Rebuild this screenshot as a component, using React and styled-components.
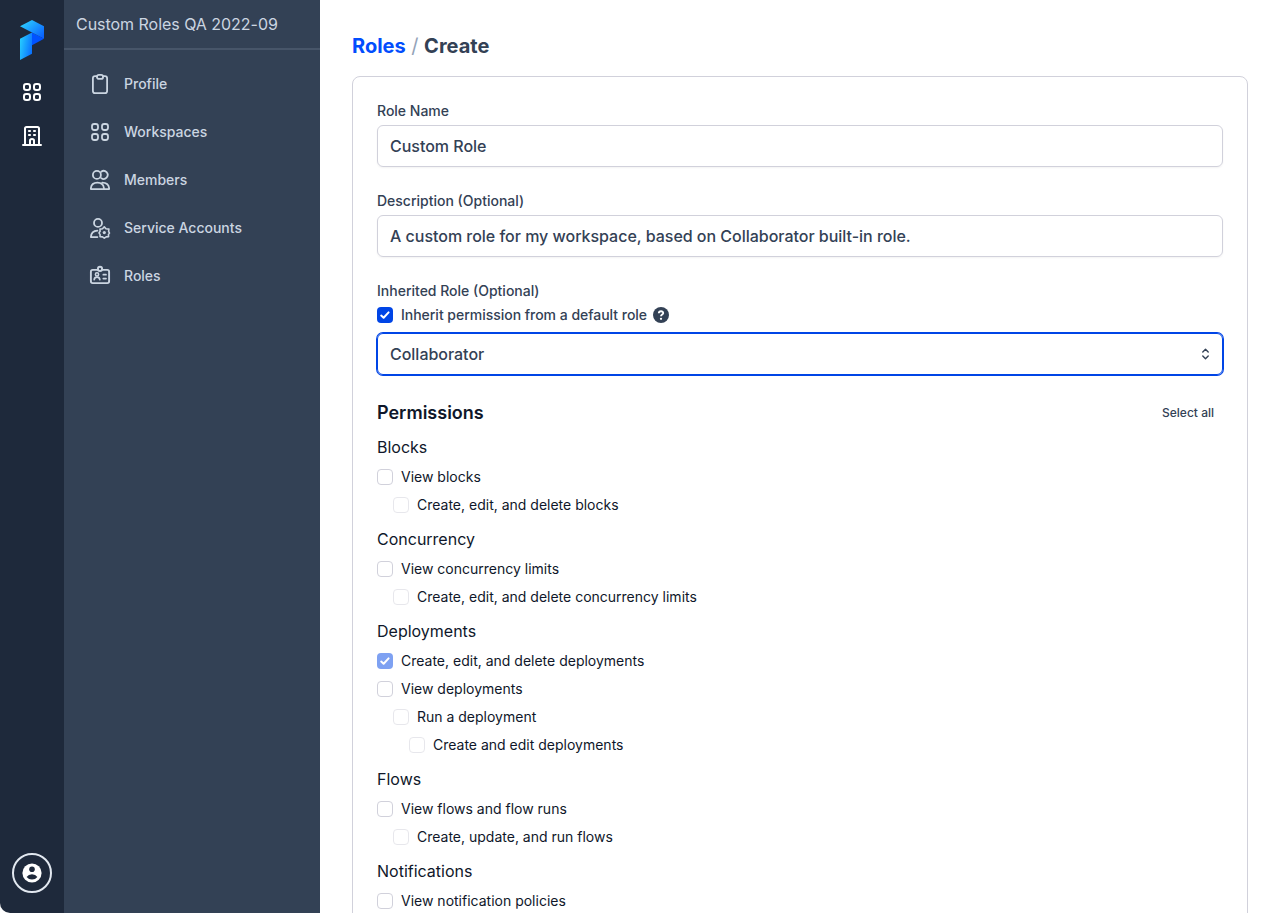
import React from 'react';
import styled, { createGlobalStyle } from 'styled-components';

const GlobalStyle = createGlobalStyle`
  *, *::before, *::after { box-sizing: border-box; }
  html, body { margin: 0; padding: 0; background: #fff; overflow: hidden; }
  body { font-family: Inter, "Liberation Sans", sans-serif; color: #0f172a; }
`;

const Page = styled.div`
  display: flex;
  height: 913px;
  overflow: hidden;
  background: #fff;
`;

const Rail = styled.nav`
  display: flex;
  flex-direction: column;
  align-items: center;
  flex: 0 0 64px;
  padding: 20px 0;
  background: #1e293b;
  border-bottom-left-radius: 10px;
  color: #fff;
`;

const RailItem = styled.a`
  display: flex;
  margin-top: 20px;
`;

const Avatar = styled.button`
  display: flex;
  align-items: center;
  justify-content: center;
  width: 40px;
  height: 40px;
  margin-top: auto;
  padding: 0;
  border: 2px solid #e2e8f0;
  border-radius: 50%;
  background: none;
  color: #fff;
`;

const Sidebar = styled.aside`
  flex: 0 0 256px;
  background: #334155;
  color: #cbd5e1;
`;

const AccountName = styled.div`
  height: 50px;
  padding: 12px 12px 0;
  border-bottom: 2px solid #475569;
  font-size: 16px;
  line-height: 24px;
  letter-spacing: -0.03px;
`;

const NavList = styled.div`
  display: flex;
  flex-direction: column;
  padding: 10px 24px;
`;

const NavItem = styled.a`
  display: flex;
  align-items: center;
  gap: 12px;
  height: 48px;
  font-size: 14px;
  font-weight: 500;
  line-height: 20px;
`;

const Main = styled.main`
  flex: 1;
  min-width: 0;
  padding: 32px 32px 0;
`;

const Breadcrumbs = styled.h1`
  display: flex;
  gap: 5.6px;
  margin: 0 0 16px;
  font-size: 20px;
  font-weight: 700;
  line-height: 28px;
  color: #334155;
`;

const CrumbLink = styled.a`
  color: #024dfd;
`;

const Slash = styled.span`
  font-weight: 400;
  color: #94a3b8;
`;

const Card = styled.form`
  height: 1100px;
  padding: 24px;
  border: 1px solid #d1d1db;
  border-radius: 8px;
`;

const Field = styled.div`
  display: flex;
  flex-direction: column;
  margin-bottom: 24px;
`;

const Label = styled.label`
  margin-bottom: 4px;
  font-size: 14px;
  font-weight: 500;
  line-height: 20px;
  color: #334155;
`;

const Control = styled.div`
  display: flex;
  align-items: center;
  justify-content: space-between;
  height: 42px;
  padding: 0 13px 0 12px;
  border: 1px solid ${(p) => (p.$focused ? '#0045e6' : '#d1d1db')};
  border-radius: 6px;
  box-shadow: ${(p) => (p.$focused ? '0 0 0 1px #0045e6' : '0 1px 2px rgba(0, 0, 0, 0.05)')};
  font-size: 16px;
  font-weight: 500;
  line-height: 24px;
  letter-spacing: -0.02px;
  color: #334155;
`;

const InheritRow = styled.div`
  display: flex;
  align-items: center;
  height: 20px;
  margin-bottom: 8px;
  font-size: 14px;
  font-weight: 500;
  line-height: 20px;
  letter-spacing: -0.02px;
  color: #334155;
`;

const HelpIcon = styled.svg`
  margin-left: 6px;
`;

const Box = styled.span`
  display: flex;
  align-items: center;
  justify-content: center;
  flex: none;
  width: 16px;
  height: 16px;
  margin-right: 8px;
  border: ${(p) => (p.$checked ? 'none' : '1px solid #d1d1db')};
  border-radius: 4px;
  background: ${(p) => (p.$checked ? '#0045e6' : '#fff')};
  opacity: ${(p) => (p.$disabled ? 0.5 : 1)};
`;

const PermissionsHeader = styled.div`
  display: flex;
  align-items: center;
  justify-content: space-between;
  height: 28px;
  margin-bottom: 8px;
`;

const PermissionsTitle = styled.h2`
  margin: 0;
  font-size: 18px;
  font-weight: 600;
  line-height: 28px;
`;

const SelectAll = styled.button`
  padding: 0 9px;
  border: 0;
  background: none;
  font: 500 12px/16px Inter, sans-serif;
  color: #334155;
`;

const Group = styled.section`
  display: flex;
  flex-direction: column;
  gap: 8px;
  margin-bottom: 12px;
`;

const GroupTitle = styled.h3`
  margin: 0;
  font-size: 16px;
  font-weight: 400;
  line-height: 24px;
`;

const Permission = styled.label`
  display: flex;
  align-items: center;
  height: 20px;
  padding-left: ${(p) => p.$level * 16}px;
  font-size: 14px;
  line-height: 20px;
`;

const Icon = ({ children, size = 24, width = 1.5 }) => (
  <svg width={size} height={size} viewBox="0 0 24 24" fill="none" stroke="currentColor"
    strokeWidth={width} strokeLinecap="round" strokeLinejoin="round">
    {children}
  </svg>
);

const Logo = () => (
  <svg width="24" height="40" viewBox="0 0 24 40">
    <defs>
      <linearGradient id="top" x1="0" y1="0" x2="1" y2="0.8">
        <stop offset="0" stopColor="#30dcff" />
        <stop offset="1" stopColor="#0a63ff" />
      </linearGradient>
      <linearGradient id="stem" x1="0" y1="0.2" x2="1" y2="0.6">
        <stop offset="0" stopColor="#27ceff" />
        <stop offset="1" stopColor="#0a72ff" />
      </linearGradient>
    </defs>
    <path d="M12 12.5 24 18.8 12 25.2Z" fill="#0052ff" />
    <path d="M0 6.3 12 0 24 6.3V18.8Z" fill="url(#top)" />
    <path d="M0 18.8 12 12.5V33.8L0 40Z" fill="url(#stem)" />
  </svg>
);

const Grid = ({ width }) => (
  <Icon width={width}>
    {[[4, 4], [14, 4], [4, 14], [14, 14]].map(([x, y]) => (
      <rect key={`${x}-${y}`} x={x} y={y} width="6" height="6" rx="2.2" />
    ))}
  </Icon>
);

const Building = () => (
  <Icon width={2}>
    <path d="M3 21H21M5 21V4.6Q5 3 6.6 3H17.4Q19 3 19 4.6V21" />
    <path d="M10 21V16.6Q10 15 12 15T14 16.6V21" />
    <path d="M8.2 7H10.8M13.2 7H15.8M8.2 11H10.8M13.2 11H15.8" strokeLinecap="butt" />
  </Icon>
);

const Clipboard = () => (
  <Icon width={1.8}>
    <path d="M8.8 4.1H7.1Q4.9 4.1 4.9 6.3V18.9Q4.9 21.1 7.1 21.1H16.9Q19.1 21.1 19.1 18.9V6.3Q19.1 4.1 16.9 4.1H15.2" />
    <rect x="8.9" y="2.9" width="6.2" height="4" rx="2" />
  </Icon>
);

const Members = () => (
  <Icon width={1.8}>
    <circle cx="8.9" cy="6.9" r="4" />
    <path d="M13.2 3.7A4 4 0 1 1 13.2 10.1" />
    <path d="M2.9 21.1V20Q3.5 14.7 9.4 14.7T15.9 20V21.1Z" />
    <path d="M14.2 14.7Q20.4 14.8 21.1 20V21.1H15.9" />
  </Icon>
);

const ServiceAccount = () => (
  <Icon width={1.8}>
    <circle cx="10" cy="6.9" r="4" />
    <path d="M9.4 14.7Q3.2 15 2.9 21.1H9.4" />
    <path d="M16.3 10.9 18 12.7 20.9 13.1 20.6 15.3 21.5 17.1 20.4 18.6 20.6 20.6 18.2 20.9 16.3 22.2 14.5 20.9 12 20.6 12.1 18.6 11 16.9 12.1 15.2 12 13.1 14.5 12.8Z" strokeWidth="1.6" />
    <circle cx="16.3" cy="16.6" r="1.6" fill="currentColor" stroke="none" />
  </Icon>
);

const Badge = () => (
  <Icon width={1.9}>
    <path d="M9.7 5.9H4.7Q2.9 5.9 2.9 7.7V17.3Q2.9 19.1 4.7 19.1H19.3Q21.1 19.1 21.1 17.3V7.7Q21.1 5.9 19.3 5.9H14.3" />
    <circle cx="12" cy="4.9" r="2.1" />
    <circle cx="9" cy="10.4" r="1.6" strokeWidth="1.6" />
    <path d="M6.2 15.6Q6.5 13.1 9 13.1T11.8 15.6M15.3 10.7H18M15.3 14.6H18" strokeWidth="1.7" />
  </Icon>
);

const UserCircle = () => (
  <svg width="20" height="20" viewBox="0 0 20 20">
    <circle cx="10" cy="10" r="9.6" fill="currentColor" />
    <circle cx="10" cy="6.2" r="2.8" fill="#1e293b" />
    <path d="M4.6 13.9Q6.5 11.2 10 11.2T15.4 13.9Q13.3 16.6 10 16.6T4.6 13.9Z" fill="#1e293b" />
  </svg>
);

const Check = () => (
  <svg width="16" height="16" viewBox="0 0 16 16" fill="none" stroke="#fff"
    strokeWidth="2" strokeLinecap="round" strokeLinejoin="round">
    <path d="M4.2 8.6 6.6 10.8 11.6 5.4" />
  </svg>
);

const Help = () => (
  <HelpIcon width="16" height="16" viewBox="0 0 16 16" fill="none">
    <circle cx="8" cy="8" r="8" fill="#334155" />
    <path d="M5.8 6.2C5.9 3.5 10.3 3.6 10.2 6.2C10.1 7.6 8 7.6 8 9.2" stroke="#fff" strokeWidth="1.9" />
    <circle cx="8" cy="11.8" r="1.15" fill="#fff" />
  </HelpIcon>
);

const Selector = () => (
  <svg width="7" height="12" viewBox="0 0 7 12" fill="none" stroke="currentColor"
    strokeWidth="1.4" strokeLinecap="round" strokeLinejoin="round">
    <path d="M0.8 3.9 3.5 1.3 6.2 3.9M0.8 8.1 3.5 10.7 6.2 8.1" />
  </svg>
);

const navItems = [
  ['Profile', <Clipboard />],
  ['Workspaces', <Grid width={1.8} />],
  ['Members', <Members />],
  ['Service Accounts', <ServiceAccount />],
  ['Roles', <Badge />],
];

const groups = [
  { title: 'Blocks', items: [
    { text: 'View blocks', level: 0 },
    { text: 'Create, edit, and delete blocks', level: 1, disabled: true },
  ] },
  { title: 'Concurrency', items: [
    { text: 'View concurrency limits', level: 0 },
    { text: 'Create, edit, and delete concurrency limits', level: 1, disabled: true },
  ] },
  { title: 'Deployments', items: [
    { text: 'Create, edit, and delete deployments', level: 0, checked: true, disabled: true },
    { text: 'View deployments', level: 0 },
    { text: 'Run a deployment', level: 1, disabled: true },
    { text: 'Create and edit deployments', level: 2, disabled: true },
  ] },
  { title: 'Flows', items: [
    { text: 'View flows and flow runs', level: 0 },
    { text: 'Create, update, and run flows', level: 1, disabled: true },
  ] },
  { title: 'Notifications', items: [
    { text: 'View notification policies', level: 0 },
  ] },
];

const Checkbox = ({ checked, disabled }) => (
  <Box $checked={checked} $disabled={disabled}>{checked && <Check />}</Box>
);

export default function App() {
  return (
    <Page>
      <GlobalStyle />
      <Rail>
        <Logo />
        <RailItem><Grid width={2} /></RailItem>
        <RailItem><Building /></RailItem>
        <Avatar type="button"><UserCircle /></Avatar>
      </Rail>
      <Sidebar>
        <AccountName>Custom Roles QA 2022-09</AccountName>
        <NavList>
          {navItems.map(([name, icon]) => (
            <NavItem key={name}>{icon}{name}</NavItem>
          ))}
        </NavList>
      </Sidebar>
      <Main>
        <Breadcrumbs>
          <CrumbLink>Roles</CrumbLink>
          <Slash>/</Slash>
          <span>Create</span>
        </Breadcrumbs>
        <Card>
          <Field>
            <Label>Role Name</Label>
            <Control>Custom Role</Control>
          </Field>
          <Field>
            <Label>Description (Optional)</Label>
            <Control>A custom role for my workspace, based on Collaborator built-in role.</Control>
          </Field>
          <Field>
            <Label>Inherited Role (Optional)</Label>
            <InheritRow>
              <Checkbox checked />
              Inherit permission from a default role
              <Help />
            </InheritRow>
            <Control $focused>Collaborator<Selector /></Control>
          </Field>
          <PermissionsHeader>
            <PermissionsTitle>Permissions</PermissionsTitle>
            <SelectAll type="button">Select all</SelectAll>
          </PermissionsHeader>
          {groups.map((group) => (
            <Group key={group.title}>
              <GroupTitle>{group.title}</GroupTitle>
              {group.items.map((item) => (
                <Permission key={item.text} $level={item.level}>
                  <Checkbox checked={item.checked} disabled={item.disabled} />
                  {item.text}
                </Permission>
              ))}
            </Group>
          ))}
        </Card>
      </Main>
    </Page>
  );
}
